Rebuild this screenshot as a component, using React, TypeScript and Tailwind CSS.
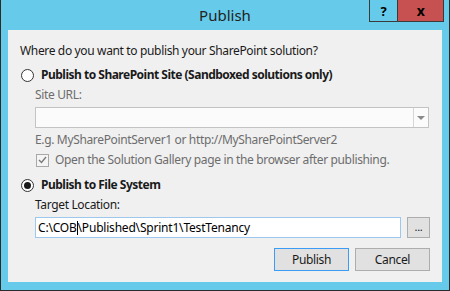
import React from 'react'

const font = { fontFamily: '"Noto Sans", "Open Sans", sans-serif' }

function Radio({ checked }: { checked?: boolean }) {
  return (
    <span className="w-[13px] h-[13px] rounded-full border border-[#333] bg-white flex items-center justify-center shrink-0">
      {checked && <span className="w-[7px] h-[7px] rounded-full bg-[#1a1a1a]" />}
    </span>
  )
}

export default function App() {
  return (
    <div
      className="w-[450px] h-[291px] bg-[#66cbea] border-x border-b border-[#2b2b2b] flex flex-col text-[12px] leading-[16px] tracking-[-0.35px] text-[#1a1a1a]"
      style={font}
    >
      {/* title bar */}
      <div className="relative h-[30px] shrink-0 flex items-center justify-center">
        <span className="text-[15px] tracking-normal text-[#222]">Publish</span>
        <div className="absolute top-0 right-[5px] flex">
          <div className="w-[29px] h-[22px] border border-t-0 border-[#3a3a3a] flex items-center justify-center font-bold text-[13px] text-black">?</div>
          <div className="w-[46px] h-[22px] bg-[#c75050] border border-t-0 border-l-0 border-[#3a3a3a] flex items-center justify-center font-bold text-[14px] text-black">x</div>
        </div>
      </div>

      {/* body */}
      <div className="mx-[7px] h-[252px] bg-[#f0f0f0] pt-[13px] pl-[12px] pr-[12px] flex flex-col">
        <div className="h-[16px]">Where do you want to publish your SharePoint solution?</div>

        <div className="mt-[8px] h-[16px] flex items-center gap-[7px] pl-[1px]">
          <Radio />
          <span className="font-bold tracking-[-0.5px]">Publish to SharePoint Site (Sandboxed solutions only)</span>
        </div>

        <div className="pl-[15px] flex flex-col text-[#6d6d6d]">
          <div className="mt-[4px] h-[16px]">Site URL:</div>
          <div className="mt-[4px] h-[21px] w-[394px] border border-[#c3c3c3] bg-[#fbfbfb] flex">
            <div className="flex-1" />
            <div className="w-[15px] border-l border-[#d6d6d6] flex items-center justify-center">
              <span className="w-0 h-0 border-x-[4px] border-x-transparent border-t-[4px] border-t-[#8a8a8a]" />
            </div>
          </div>
          <div className="mt-[4px] h-[16px]">E.g. MySharePointServer1 or http://MySharePointServer2</div>
          <div className="mt-[4px] h-[16px] flex items-center gap-[6px] pl-[1px]">
            <span className="w-[13px] h-[13px] border border-[#a8a8a8] bg-[#f4f4f4] flex items-center justify-center shrink-0">
              <svg width="9" height="8" viewBox="0 0 9 8">
                <path d="M1 4 L3.5 6.5 L8 1" fill="none" stroke="#7a7a7a" strokeWidth="1.4" />
              </svg>
            </span>
            <span>Open the Solution Gallery page in the browser after publishing.</span>
          </div>
        </div>

        <div className="mt-[9px] h-[16px] flex items-center gap-[7px] pl-[1px]">
          <Radio checked />
          <span className="font-bold tracking-[-0.5px]">Publish to File System</span>
        </div>

        <div className="pl-[15px] flex flex-col">
          <div className="mt-[4px] h-[16px]">Target Location:</div>
          <div className="mt-[4px] flex gap-[6px]">
            <div className="w-[366px] h-[21px] border border-[#9ec7ee] bg-white flex items-center pl-[2px] text-black tracking-[-0.2px]">
              <span>C:\COB</span>
              <span className="w-px h-[14px] bg-black" />
              <span>\Published\Sprint1\TestTenancy</span>
            </div>
            <button className="w-[23px] h-[21px] border border-[#adadad] bg-[#e1e1e1] flex items-center justify-center text-[11px] leading-none pb-[3px]">...</button>
          </div>
        </div>

        <div className="mt-[10px] flex justify-end gap-[6px]">
          <button className="w-[75px] h-[23px] border border-[#3c9bf4] bg-[#e1e1e1] flex items-center justify-center">Publish</button>
          <button className="w-[75px] h-[23px] border border-[#adadad] bg-[#e1e1e1] flex items-center justify-center">Cancel</button>
        </div>
      </div>
    </div>
  )
}
